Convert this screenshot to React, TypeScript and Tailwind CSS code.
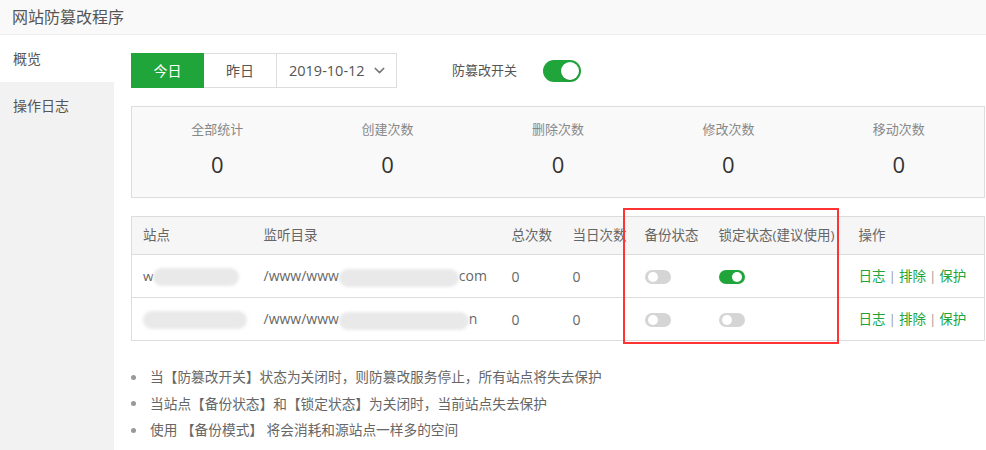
import { ChevronDown } from 'lucide-react';
import clsx from 'clsx';

const STATS = [
  { label: '全部统计', value: 0 },
  { label: '创建次数', value: 0 },
  { label: '删除次数', value: 0 },
  { label: '修改次数', value: 0 },
  { label: '移动次数', value: 0 },
];

const TIPS = [
  '当【防篡改开关】状态为关闭时，则防篡改服务停止，所有站点将失去保护',
  '当站点【备份状态】和【锁定状态】为关闭时，当前站点失去保护',
  '使用 【备份模式】 将会消耗和源站点一样多的空间',
];

function Blob({ w }: { w: number }) {
  return <span className="inline-block h-[18px] rounded-full bg-[#e9e9e9] blur-[1.5px] align-middle" style={{ width: w }} />;
}

function MiniSwitch({ on }: { on: boolean }) {
  return (
    <span className={clsx('relative inline-block h-[14px] w-[26px] rounded-full align-middle', on ? 'bg-[#20a53a]' : 'bg-[#d5d5d5]')}>
      <span className={clsx('absolute top-[2px] h-[10px] w-[10px] rounded-full bg-white', on ? 'right-[3px]' : 'left-[3px]')} />
    </span>
  );
}

export default function App() {
  const rows = [
    { site: 'w', siteBlob: 86, dirBlob: 120, tail: 'com', backup: false, lock: true },
    { site: '', siteBlob: 104, dirBlob: 130, tail: 'n', backup: false, lock: false },
  ];

  return (
    <div className="h-[450px] w-[986px] overflow-hidden bg-white font-['Open_Sans','Noto_Sans_CJK_SC',sans-serif] text-[13px] text-[#666]">
      {/* 顶部标题 */}
      <div className="flex h-[35px] items-center border-b border-[#eee] bg-[#f9f9f9] pl-[12px] text-[16px] text-[#555]">
        网站防篡改程序
      </div>

      <div className="flex h-[415px]">
        {/* 左侧菜单 */}
        <div className="w-[114px] shrink-0 bg-[#f2f2f2] text-[14px] text-[#555]">
          <div className="flex h-[47px] items-center bg-white pl-[13px]">概览</div>
          <div className="flex h-[46px] items-center pl-[13px]">操作日志</div>
        </div>

        {/* 主内容 */}
        <div className="relative flex-1 pl-[17px] pr-px pt-[18px]">
          <div className="flex items-center">
            <div className="flex h-[35px] text-[14px]">
              <button className="w-[73px] border border-[#20a53a] bg-[#20a53a] text-white">今日</button>
              <button className="w-[73px] border border-l-0 border-[#ddd] text-[#555]">昨日</button>
              <div className="flex w-[120px] items-center justify-between border border-l-0 border-[#ddd] pl-[12px] pr-[8px] text-[#555]">
                <span className="text-[14.5px]">2019-10-12</span>
                <ChevronDown className="h-[17px] w-[17px] text-[#777]" strokeWidth={2} />
              </div>
            </div>
            <span className="ml-[55px] text-[13px] text-[#555]">防篡改开关</span>
            <span className="relative ml-[26px] inline-block h-[22px] w-[38px] rounded-full bg-[#20a53a]">
              <span className="absolute right-[2px] top-[2px] h-[18px] w-[18px] rounded-full bg-white shadow-sm" />
            </span>
          </div>

          {/* 统计 */}
          <div className="mt-[18px] grid h-[92px] grid-cols-5 border border-[#ddd] bg-[#f9f9f9]">
            {STATS.map((s) => (
              <div key={s.label} className="flex flex-col items-center pt-[13px]">
                <span className="text-[13px] text-[#888]">{s.label}</span>
                <span className="mt-[9px] text-[22px] leading-[30px] text-[#333]">{s.value}</span>
              </div>
            ))}
          </div>

          {/* 站点表格 */}
          <table className="mt-[18px] w-full table-fixed border-collapse border border-[#ddd] text-left text-[13.5px]">
            <colgroup>
              <col className="w-[121px]" />
              <col className="w-[248px]" />
              <col className="w-[61px]" />
              <col className="w-[72px]" />
              <col className="w-[74px]" />
              <col className="w-[140px]" />
              <col />
            </colgroup>
            <thead>
              <tr className="h-[38px] bg-[#f6f6f6]">
                <th className="pl-[11px] font-normal">站点</th>
                <th className="pl-[11px] font-normal">监听目录</th>
                <th className="pl-[11px] font-normal">总次数</th>
                <th className="whitespace-nowrap pl-[11px] font-normal">当日次数</th>
                <th className="pl-[11px] font-normal">备份状态</th>
                <th className="whitespace-nowrap pl-[11px] font-normal">锁定状态(建议使用)</th>
                <th className="pl-[11px] font-normal">操作</th>
              </tr>
            </thead>
            <tbody>
              {rows.map((r, i) => (
                <tr key={i} className="h-[43px] border-t border-[#ddd]">
                  <td className="whitespace-nowrap pl-[11px]">
                    {r.site}
                    <Blob w={r.siteBlob} />
                  </td>
                  <td className="whitespace-nowrap pl-[11px] text-[14px]">
                    /www/www<Blob w={r.dirBlob} />
                    {r.tail}
                  </td>
                  <td className="pl-[11px] text-[14px]">0</td>
                  <td className="pl-[11px] text-[14px]">0</td>
                  <td className="pl-[11px]"><MiniSwitch on={r.backup} /></td>
                  <td className="pl-[11px]"><MiniSwitch on={r.lock} /></td>
                  <td className="whitespace-nowrap pl-[11px] text-[#20a53a]">
                    日志<span className="mx-[3px] text-[#999]">|</span>排除<span className="mx-[3px] text-[#999]">|</span>保护
                  </td>
                </tr>
              ))}
            </tbody>
          </table>

          {/* 红色标注框 */}
          <div className="pointer-events-none absolute left-[509px] top-[173px] h-[136px] w-[216px] border-2 border-[#f33]" />

          {/* 提示 */}
          <ul className="mt-[27px] space-y-[8.5px] text-[13.7px] leading-[18px] text-[#666]">
            {TIPS.map((t) => (
              <li key={t} className="flex items-center gap-[14px]">
                <span className="h-[5px] w-[5px] shrink-0 rounded-full bg-[#999]" />
                {t}
              </li>
            ))}
          </ul>
        </div>
      </div>
    </div>
  );
}
